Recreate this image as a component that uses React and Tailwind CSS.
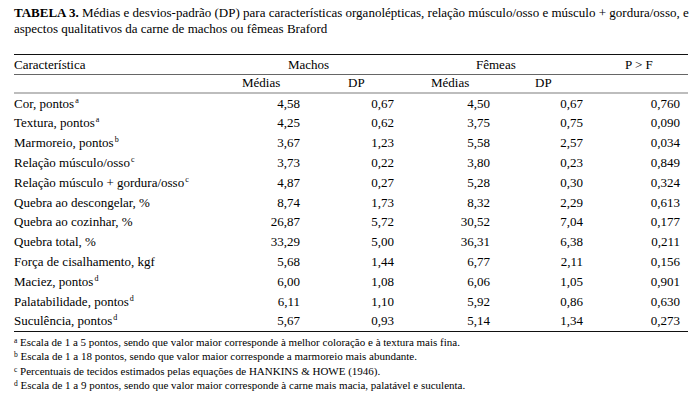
import React from "react";

const rows = [
  ["Cor, pontos", "a", "4,58", "0,67", "4,50", "0,67", "0,760"],
  ["Textura, pontos", "a", "4,25", "0,62", "3,75", "0,75", "0,090"],
  ["Marmoreio, pontos", "b", "3,67", "1,23", "5,58", "2,57", "0,034"],
  ["Relação músculo/osso", "c", "3,73", "0,22", "3,80", "0,23", "0,849"],
  ["Relação músculo + gordura/osso", "c", "4,87", "0,27", "5,28", "0,30", "0,324"],
  ["Quebra ao descongelar, %", "", "8,74", "1,73", "8,32", "2,29", "0,613"],
  ["Quebra ao cozinhar, %", "", "26,87", "5,72", "30,52", "7,04", "0,177"],
  ["Quebra total, %", "", "33,29", "5,00", "36,31", "6,38", "0,211"],
  ["Força de cisalhamento, kgf", "", "5,68", "1,44", "6,77", "2,11", "0,156"],
  ["Maciez, pontos", "d", "6,00", "1,08", "6,06", "1,05", "0,901"],
  ["Palatabilidade, pontos", "d", "6,11", "1,10", "5,92", "0,86", "0,630"],
  ["Suculência, pontos", "d", "5,67", "0,93", "5,14", "1,34", "0,273"],
];

const notes = [
  ["a", "Escala de 1 a 5 pontos, sendo que valor maior corresponde à melhor coloração e à textura mais fina."],
  ["b", "Escala de 1 a 18 pontos, sendo que valor maior corresponde a marmoreio mais abundante."],
  ["c", "Percentuais de tecidos estimados pelas equações de HANKINS & HOWE (1946)."],
  ["d", "Escala de 1 a 9 pontos, sendo que valor maior corresponde à carne mais macia, palatável e suculenta."],
];

const Sup = ({ children }) => (
  <sup className="text-[8px] -top-[5px] ml-[1px]">{children}</sup>
);

const App = () => {
  return (
    <div className="w-[700px] h-[400px] bg-white px-[14px] pt-[5px] font-['Liberation_Serif','Times_New_Roman',serif] text-[13px] text-black overflow-hidden">
      {/* title */}
      <div className="w-[673px] leading-[16px]">
        <div className="whitespace-nowrap text-justify [text-align-last:justify]">
          <b>TABELA 3.</b> Médias e desvios-padrão (DP) para características organolépticas, relação músculo/osso e músculo + gordura/osso, e
        </div>
        <div>aspectos qualitativos da carne de machos ou fêmeas Braford</div>
      </div>

      {/* table */}
      <div className="mt-[17px] w-[674px] border-t-[1.5px] border-[#111]">
        <div className="flex h-[19.5px] items-center border-b border-[#666]">
          <div className="w-[226px]">Característica</div>
          <div className="w-[190px] pl-[48px]">Machos</div>
          <div className="w-[170px] pl-[46px]">Fêmeas</div>
          <div className="flex-1 pl-[25px]">P &gt; F</div>
        </div>
        <div className="flex h-[19px] items-center border-b-2 border-[#bdbdbd]">
          <div className="w-[226px]" />
          <div className="w-[105px] pl-[2px]">Médias</div>
          <div className="w-[85px] pl-[3px]">DP</div>
          <div className="w-[103px] pl-[1px]">Médias</div>
          <div className="w-[67px] pl-[2px]">DP</div>
          <div className="flex-1" />
        </div>
        {rows.map((r) => (
          <div key={r[0]} className="flex h-[19.8px] items-center">
            <div className="w-[226px] whitespace-nowrap">
              {r[0]}
              {r[1] && <Sup>{r[1]}</Sup>}
            </div>
            <div className="w-[105px] pr-[45px] text-right">{r[2]}</div>
            <div className="w-[85px] pr-[36px] text-right">{r[3]}</div>
            <div className="w-[103px] pr-[43px] text-right">{r[4]}</div>
            <div className="w-[67px] pr-[17px] text-right">{r[5]}</div>
            <div className="flex-1 pr-[8px] text-right">{r[6]}</div>
          </div>
        ))}
      </div>

      {/* footnotes */}
      <div className="border-t-[1.5px] border-[#111] w-[674px] pt-[3px] text-[11px] leading-[14.3px]">
        {notes.map((n) => (
          <div key={n[0]}>
            <sup className="text-[7.5px] -top-[3px]">{n[0]}</sup> {n[1]}
          </div>
        ))}
      </div>
    </div>
  );
};

export default App;
